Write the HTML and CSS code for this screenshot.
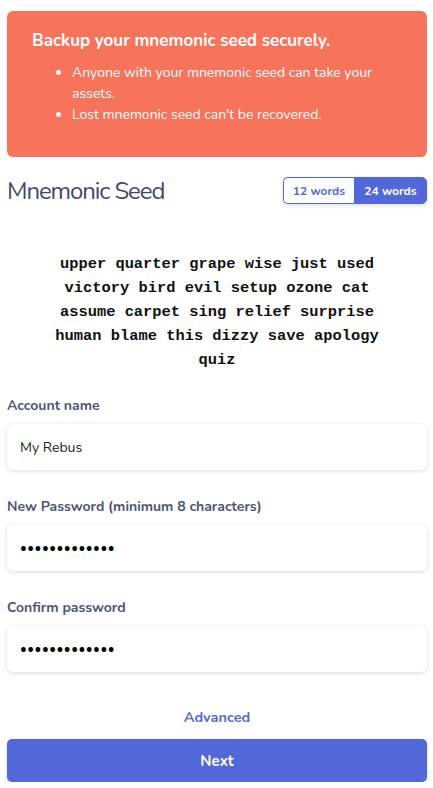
FILE: index.html
```
<!DOCTYPE html>
<html>
<head>
<meta charset="utf-8">
<link rel="stylesheet" href="styles.css">
</head>
<body>
<div class="page">
  <div class="alert">
    <div class="alert-title">Backup your mnemonic seed securely.</div>
    <ul class="alert-list">
      <li>Anyone with your mnemonic seed can take your assets.</li>
      <li>Lost mnemonic seed can't be recovered.</li>
    </ul>
  </div>
  <div class="seed-header">
    <h1 class="seed-title">Mnemonic Seed</h1>
    <div class="toggle">
      <button class="toggle-btn">12 words</button>
      <button class="toggle-btn active">24 words</button>
    </div>
  </div>
  <div class="seed-words">upper quarter grape wise just used victory bird evil setup ozone cat assume carpet sing relief surprise human blame this dizzy save apology quiz</div>
  <div class="field">
    <label class="field-label">Account name</label>
    <div class="input">My Rebus</div>
  </div>
  <div class="field">
    <label class="field-label">New Password (minimum 8 characters)</label>
    <div class="input dots">•••••••••••••</div>
  </div>
  <div class="field">
    <label class="field-label">Confirm password</label>
    <div class="input dots">•••••••••••••</div>
  </div>
  <div class="advanced">Advanced</div>
  <button class="next">Next</button>
</div>
</body>
</html>
```
FILE: styles.css
```
* { box-sizing: border-box; }
html, body { margin: 0; padding: 0; background: #fff; }
body { font-family: "Nunito", Lato, "Noto Sans", sans-serif; color: #3f4a6b; }
.page { padding: 11px 6px 0 7px; display: flex; flex-direction: column; }
.alert {
  background: #f8735c;
  border-radius: 6px;
  color: #fff;
  padding: 19px 25px 24px 25px;
  height: 146px;
}
.alert-title { font-size: 17px; font-weight: 700; line-height: 22px; }
.alert-list { margin: 10px 0 0 0; padding-left: 40px; font-size: 14px; line-height: 21px; }
.alert-list li { margin: 0; }
.seed-header {
  display: flex; justify-content: space-between; align-items: center;
  margin-top: 20px; height: 27px;
}
.seed-title { margin: 0; font-size: 24px; font-weight: 400; color: #3f4a6b; letter-spacing: -1.1px; }
.toggle { display: flex; height: 27px; border-radius: 5px; box-shadow: 0 2px 4px rgba(60,70,120,0.15); }
.toggle-btn {
  font-family: inherit; font-size: 12px; font-weight: 700; border: 1px solid #5368d8;
  background: #fff; color: #5368d8; padding: 0 7px; width: 71px; cursor: pointer;
}
.toggle-btn:first-child { border-radius: 5px 0 0 5px; border-right: none; }
.toggle-btn.active { background: #5368d8; color: #fff; border-radius: 0 5px 5px 0; width: 73px; }
.seed-words {
  margin: 48px auto 0; width: 340px; text-align: center;
  font-family: "Liberation Mono", "Courier New", monospace; font-size: 15.4px; font-weight: 700;
  line-height: 24px; color: #111;
}
.field { margin-top: 24px; display: flex; flex-direction: column; }
.field + .field { margin-top: 27px; }
.field-label { font-size: 14px; font-weight: 700; color: #4a5578; line-height: 19px; }
.input {
  margin-top: 9px; height: 46px; border-radius: 6px; background: #fff;
  box-shadow: 0 1px 4px rgba(60,70,110,0.2);
  display: flex; align-items: center; padding: 0 13px; font-size: 14px; color: #222;
}
.input.dots { font-size: 13px; letter-spacing: 0.5px; color: #000; }
.advanced { text-align: center; margin-top: 36px; font-size: 14.5px; font-weight: 700; color: #5368d8; line-height: 18px; }
.next {
  margin-top: 13px; height: 43px; border: none; border-radius: 5px; background: #5368d8; color: #fff;
  font-family: inherit; font-size: 15px; font-weight: 700; box-shadow: 0 2px 4px rgba(60,70,120,0.2);
}
```
